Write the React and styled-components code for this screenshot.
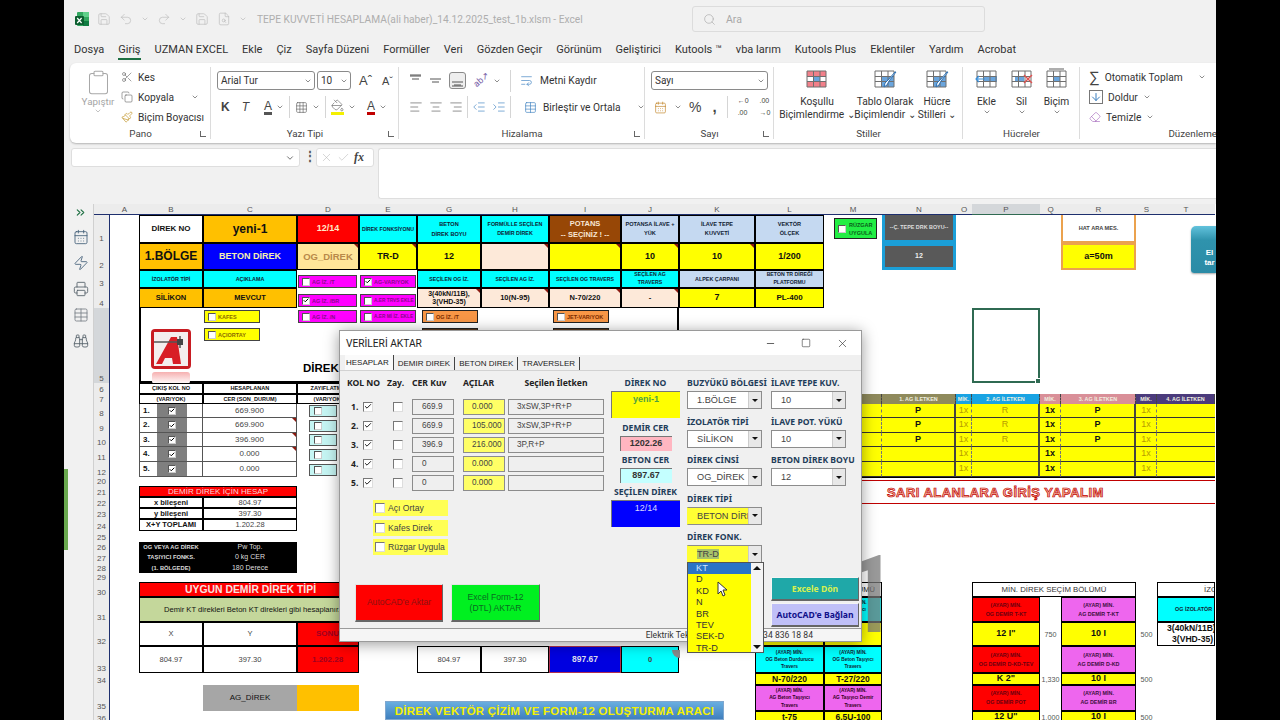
import { Fragment } from 'react';
import styled, { createGlobalStyle } from 'styled-components';
import {
  AlignCenter, AlignLeft, AlignRight, ArrowDown, ChevronDown, ChevronsRight, Clipboard, Copy, Eraser,
  Grid3x3, IndentDecrease, IndentIncrease, Paintbrush, PaintBucket, Redo2, Save, Scissors, Search,
  Undo2, WrapText, X, Check, Square, Minus, Binoculars, Printer, Zap, CalendarDays, Table, FileSearch,
} from 'lucide-react';

// Sheet grid
const COLS = 'ABCDEGHIJKLMNOPQRST';
const COL_W = [29, 64, 94, 62, 58, 64, 68, 72, 58, 76, 69, 58, 74, 16, 68, 21, 75, 21, 58];
const ROW_NO = [1, 2, 3, 4, 5, 6, 7, 8, 9, 10, 11, 12, 20, 21, 22, 23, 24, 25, 26, 27, 28, 29, 30, 31, 32, 33, 34, 35, 36];
const ROW_H = [28, 27, 18, 20, 75, 11, 10, 14, 15, 14, 15, 15, 9, 11, 11, 11, 12, 11, 10, 11, 10, 9, 15, 25, 24, 27, 12, 26, 12];
const col = (l) => COLS.indexOf(l) + 2;
const row = (n) => ROW_NO.indexOf(n) + 2;

const GlobalStyle = createGlobalStyle`
  html, body { margin: 0; padding: 0; background: #000; }
  body { font-family: Roboto, "Liberation Sans", sans-serif; }
`;

const Page = styled.div`
  width: 1280px;
  height: 720px;
  display: flex;
  justify-content: center;
  background: #000;
  overflow: hidden;
`;

const ExcelWindow = styled.div`
  position: relative;
  width: 1152px;
  height: 720px;
  display: flex;
  flex-direction: column;
  background: #f1f1f1;
  overflow: hidden;
`;

// Title bar
const TitleBar = styled.div`
  height: 38px;
  flex: none;
  display: flex;
  align-items: center;
  padding-left: 11px;
  gap: 8px;
  color: #b9b9b9;
`;

const TitleText = styled.span`
  margin-left: 2px;
  width: 427px;
  font-size: 10.2px;
  color: #aeaeae;
  white-space: nowrap;
`;

const SearchBox = styled.div`
  width: 293px;
  height: 26px;
  box-sizing: border-box;
  display: flex;
  align-items: center;
  gap: 10px;
  padding-left: 10px;
  border: 1px solid #dcdcdc;
  border-radius: 3px;
  font-size: 10.5px;
  color: #a8a8a8;
`;

const MenuBar = styled.div`
  height: 25px;
  flex: none;
  display: flex;
  align-items: center;
  padding-left: 10px;
  gap: 14px;
  font-size: 11px;
  color: #333;
`;

const MenuItem = styled.span`
  padding: 2px 0;
  white-space: nowrap;
  border-bottom: 2px solid ${(p) => (p.$active ? '#1d6f42' : 'transparent')};
`;

// Ribbon
const Ribbon = styled.div`
  height: 80px;
  flex: none;
  margin-left: 6px;
  display: flex;
  background: #fff;
  border-radius: 6px 0 0 6px;
  box-shadow: 0 1px 2px rgba(0, 0, 0, 0.25);
  font-size: 10.2px;
  color: #333;
`;

const Group = styled.div`
  position: relative;
  width: ${(p) => p.$w}px;
  flex: none;
  display: flex;
  flex-direction: column;
  padding: 3px 0 3px;
  box-sizing: border-box;
  overflow: hidden;
  &:not(:last-child)::after {
    content: '';
    position: absolute;
    right: 0;
    top: 4px;
    bottom: 4px;
    width: 1px;
    background: #dcdcdc;
  }
`;

const GroupBody = styled.div`
  flex: 1;
  display: flex;
  gap: ${(p) => p.$gap || 0}px;
  padding-left: ${(p) => p.$pl || 0}px;
  min-height: 0;
`;

const GroupLabel = styled.div`
  height: 13px;
  text-align: ${(p) => p.$align || 'center'};
  font-size: 9.8px;
  color: #444;
  line-height: 13px;
  white-space: nowrap;
`;

const Launcher = styled.span`
  position: absolute;
  right: 5px;
  bottom: 6px;
  width: 5px;
  height: 5px;
  border-left: 1px solid #666;
  border-bottom: 1px solid #666;
`;

const Stack = styled.div`
  display: flex;
  flex-direction: column;
  gap: ${(p) => p.$gap || 0}px;
  padding-top: ${(p) => p.$pt || 0}px;
`;

const Line = styled.div`
  display: flex;
  align-items: center;
  gap: ${(p) => p.$gap ?? 5}px;
  height: ${(p) => p.$h || 20}px;
  white-space: nowrap;
`;

const PasteButton = styled.div`
  width: 46px;
  display: flex;
  flex-direction: column;
  align-items: center;
  padding-top: 3px;
  color: #a5a5a5;
  font-size: 9.8px;
`;

const Combo = styled.div`
  width: ${(p) => p.$w}px;
  height: 19px;
  box-sizing: border-box;
  display: flex;
  align-items: center;
  justify-content: space-between;
  padding: 0 2px 0 3px;
  border: 1px solid #8a8a8a;
  border-radius: 3px;
  font-size: 10px;
`;

const Sep = styled.span`
  width: 1px;
  height: ${(p) => p.$h || 22}px;
  background: #d5d5d5;
  margin: 0 ${(p) => p.$m ?? 3}px;
`;

const FontLetter = styled.span`
  position: relative;
  font-family: "Liberation Sans", sans-serif;
  font-size: ${(p) => p.$size || 12}px;
  font-weight: ${(p) => (p.$bold ? 700 : 400)};
  font-style: ${(p) => (p.$italic ? 'italic' : 'normal')};
  border-bottom: ${(p) => (p.$bar ? `3px solid ${p.$bar}` : 'none')};
  line-height: 12px;
  color: #444;
  margin-left: ${(p) => p.$ml || 0}px;
`;

const BigTool = styled.div`
  width: ${(p) => p.$w}px;
  display: flex;
  flex-direction: column;
  align-items: center;
  text-align: center;
  font-size: 10.2px;
  line-height: 13px;
  flex: none;
  padding-top: 2px;
  white-space: nowrap;
  svg { margin-bottom: 5px; }
`;

const SelectedTool = styled.span`
  display: flex;
  padding: 1px;
  border: 1px solid #8a8a8a;
  border-radius: 3px;
  background: #eee;
`;

const RotatedAb = styled.span`
  display: inline-block;
  transform: rotate(-40deg);
  font-size: 9px;
  color: #7a5fa8;
  width: 13px;
`;

const ToolChevron = ({ ml }) => <ChevronDown size={8} color="#555" strokeWidth={2} style={ml ? { marginLeft: ml } : undefined} />;
const Ic = { strokeWidth: 1.1, color: '#555' };

// Formula bar
const FormulaBar = styled.div`
  height: 61px;
  flex: none;
  display: flex;
  gap: 4px;
  padding: 5px 0 0 7px;
  box-sizing: border-box;
`;

const NameBox = styled.div`
  width: 229px;
  height: 19px;
  box-sizing: border-box;
  display: flex;
  align-items: center;
  justify-content: flex-end;
  padding-right: 4px;
  background: #fff;
  border: 1px solid #dedede;
  border-radius: 3px;
`;

const FxDots = styled.span`
  width: 8px;
  height: 19px;
  text-align: center;
  font-size: 12px;
  font-weight: 700;
  line-height: 17px;
  color: #555;
`;

const FxBox = styled.div`
  width: 58px;
  height: 19px;
  box-sizing: border-box;
  display: flex;
  align-items: center;
  gap: 4px;
  padding-left: 3px;
  background: #fff;
  border: 1px solid #dedede;
  border-radius: 3px;
  font-family: "Liberation Serif", serif;
  font-style: italic;
  font-weight: 700;
  font-size: 12px;
  color: #444;
`;

const FormulaInput = styled.div`
  flex: 1;
  height: 49px;
  background: #fff;
  border: 1px solid #dedede;
  border-right: 0;
  border-radius: 3px 0 0 3px;
`;

// Sheet area
const SheetRow = styled.div`
  flex: 1;
  min-height: 0;
  display: flex;
`;

const SideRail = styled.div`
  width: 30px;
  flex: none;
  display: flex;
  flex-direction: column;
  align-items: center;
  gap: 10px;
  padding: 2px 0 0 4px;
  box-sizing: border-box;
  border-right: 1px solid #d0d0d0;
`;

const GreenHandle = styled.div`
  position: absolute;
  left: 0;
  top: 469px;
  width: 4px;
  height: 81px;
  background: #6aa84f;
`;

const SheetGrid = styled.div`
  flex: 1;
  display: grid;
  grid-template-columns: 16px ${COL_W.map((w) => `${w}px`).join(' ')};
  grid-template-rows: 11px ${ROW_H.map((h) => `${h}px`).join(' ')};
  background: #fff;
  font-family: "Liberation Sans", Arial, sans-serif;
  overflow: hidden;
`;

const ColHead = styled.div`
  grid-column: ${(p) => p.$c};
  grid-row: 1;
  display: flex;
  align-items: center;
  justify-content: center;
  font-size: 8px;
  color: #555;
  background: ${(p) => (p.$on ? '#d4d7da' : '#ececec')};
  border-bottom: 1px solid ${(p) => (p.$on ? '#2f6a52' : '#1e2f6e')};
`;

const RowHead = styled.div`
  grid-column: 1;
  grid-row: ${(p) => p.$r};
  display: flex;
  align-items: flex-end;
  justify-content: center;
  font-size: 8px;
  line-height: 9px;
  color: #555;
  background: ${(p) => (p.$on ? '#d4d7da' : '#ececec')};
  border-right: 1.5px solid #1e2f6e;
`;

const Cell = styled.div`
  position: relative;
  grid-column: ${(p) => p.$c} / span ${(p) => p.$cs || 1};
  grid-row: ${(p) => p.$r} / span ${(p) => p.$rs || 1};
  display: flex;
  align-items: center;
  justify-content: ${(p) => (p.$pl ? 'flex-start' : 'center')};
  padding-left: ${(p) => p.$pl || 0}px;
  text-align: center;
  white-space: ${(p) => (p.$pre ? 'pre' : 'pre-line')};
  box-sizing: border-box;
  overflow: hidden;
  background: ${(p) => p.$bg || 'transparent'};
  color: ${(p) => p.$fg || '#111'};
  font-size: ${(p) => p.$fs || 8}px;
  font-weight: ${(p) => (p.$bold === false ? 400 : 700)};
  line-height: ${(p) => p.$lh || 1.25};
  border: ${(p) => p.$border || '1px solid #000'};
  border-top-width: ${(p) => (p.$noTop ? 0 : '')};
  &::after {
    content: '';
    display: ${(p) => (p.$note ? 'block' : 'none')};
    position: absolute;
    top: 0;
    right: 0;
    border-top: 4px solid #8c1a10;
    border-left: 4px solid transparent;
  }
`;

const PlainCell = styled(Cell).attrs({ $bold: false, $border: 'none' })``;

const FrameBox = styled.div`
  grid-column: ${col('B')} / span 8;
  grid-row: ${row(5)};
  border: 2px solid #000;
  border-top: 0;
  background: #fff;
`;

const ChipColumn = styled.div`
  grid-column: ${(p) => p.$c};
  grid-row: ${(p) => p.$r};
  display: flex;
  flex-direction: column;
  gap: ${(p) => p.$gap || 5}px;
  padding: ${(p) => p.$pt || 2}px ${(p) => p.$pr ?? 2}px 0 ${(p) => p.$pl ?? 1}px;
  overflow: hidden;
`;

const Chip = styled.div`
  height: 13px;
  flex: none;
  box-sizing: border-box;
  display: flex;
  align-items: center;
  gap: 2px;
  padding-left: 3px;
  width: ${(p) => (p.$w ? `${p.$w}px` : 'auto')};
  background: ${(p) => p.$bg};
  border: 1px solid ${(p) => p.$line || '#444'};
  color: ${(p) => p.$fg || '#8a0a8a'};
  font-size: ${(p) => p.$fs || 5.5}px;
  font-weight: 700;
  white-space: nowrap;
  overflow: hidden;
`;

const WindChip = styled(Chip)`
  height: 21px;
  width: 43px;
  gap: 3px;
  white-space: pre-line;
  text-align: left;
  line-height: 8px;
`;

const ShapeCell = styled(Cell)`
  justify-content: flex-end;
  align-items: flex-start;
  padding: 3px 5px 0 0;
  overflow: visible;
  border: 0;
`;

const TinyBox = styled.span`
  width: 8px;
  height: 8px;
  flex: none;
  display: flex;
  align-items: center;
  justify-content: center;
  box-sizing: border-box;
  background: #fff;
  border: 1px solid #555;
  border-right-color: #ccc;
  border-bottom-color: #ccc;
  svg { display: block; }
`;

const TinyCheck = ({ on, size = 7 }) => (
  <TinyBox>{on && <Check size={size} color="#000" strokeWidth={4} />}</TinyBox>
);

const LogoWrap = styled.div`
  grid-column: ${col('B')};
  grid-row: ${row(5)};
  display: flex;
  justify-content: center;
  padding-top: 20px;
`;

const BigLabel = styled.div`
  grid-column: ${col('D')} / span 2;
  grid-row: ${row(5)};
  display: flex;
  align-items: flex-end;
  padding: 0 0 9px 6px;
  font-size: 11.5px;
  font-weight: 700;
`;

const KolCell = styled(Cell)`
  justify-content: flex-start;
  gap: 6px;
  padding-left: 3px;
  border-width: 0 1px 1px 1px;
  border-color: #555;
`;

const ValueCell = styled(Cell)`
  border-width: 0 1px 1px 0;
  border-color: #555;
`;

const ZayCell = styled(Cell)`
  justify-content: flex-start;
  padding-left: 12px;
  border: 0;
`;

const GrayPatch = styled.span`
  width: 30px;
  height: 100%;
  display: flex;
  align-items: center;
  justify-content: center;
  background: #7f7f7f;
  margin-left: 1px;
`;

const CyanPatch = styled.span`
  width: 28px;
  height: 12px;
  display: flex;
  align-items: center;
  padding-left: 4px;
  box-sizing: border-box;
  background: #c5f5f3;
  border: 1px solid #555;
`;

const ConductorHead = styled(Cell)`
  border: 0;
  border-right: 1px dashed #444;
`;

const YellowCell = styled(Cell)`
  background: #ffff00;
  border: 0;
  border-bottom: 1px solid ${(p) => p.$under || '#333'};
  border-right: ${(p) => p.$edge || '1px dashed #777'};
  color: ${(p) => p.$fg || '#111'};
  font-size: 9px;
`;

const SelectionBox = styled.div`
  grid-column: ${col('P')};
  grid-row: ${row(5)};
  position: relative;
  border: 2px solid #2f6a52;
  box-sizing: border-box;
  &::after {
    content: '';
    position: absolute;
    right: -3px;
    bottom: -3px;
    width: 4px;
    height: 4px;
    background: #2f6a52;
    border: 1px solid #fff;
  }
`;

const Banner = styled.div`
  grid-column: ${col('M')} / span 8;
  grid-row: ${row(20)} / span 5;
  align-self: start;
  height: 27px;
  margin-top: -1px;
  border-top: 2px solid #000;
  display: flex;
  flex-direction: column;
`;

const BannerInner = styled.div`
  height: 22px;
  margin-top: 2px;
  padding-left: 63px;
  display: flex;
  align-items: center;
  border-top: 1px solid #c00000;
  border-bottom: 1.5px solid #c00000;
  font-size: 13px;
  font-weight: 700;
  letter-spacing: 0.45px;
  color: #f6b9a0;
  -webkit-text-stroke: 0.7px #c00000;
  white-space: nowrap;
`;

// Floating shapes on the sheet
const FloatShape = styled.div`
  position: absolute;
  left: ${(p) => p.$x}px;
  top: ${(p) => p.$y}px;
  width: ${(p) => p.$w}px;
  height: ${(p) => p.$h}px;
`;

const SheetTitleShape = styled(FloatShape)`
  display: flex;
  align-items: center;
  justify-content: center;
  background: linear-gradient(#6aaee0, #3f7fbe);
  border: 1px solid #7fa7cf;
  box-sizing: border-box;
  font-family: "Liberation Sans", sans-serif;
  font-size: 11.4px;
  font-weight: 700;
  letter-spacing: 0.3px;
  color: #f4f000;
  white-space: nowrap;
`;

const TealShape = styled(FloatShape)`
  box-sizing: border-box;
  padding: 22px 0 0 12px;
  background: linear-gradient(#62c2dc, #2f93ad 30%, #2b8ba6);
  border-radius: 5px 0 0 3px;
  box-shadow: 0 1px 2px rgba(0, 0, 0, 0.35);
  font-family: "Liberation Sans", sans-serif;
  font-size: 8px;
  line-height: 10px;
  font-weight: 700;
  color: #fff;
  text-align: center;
`;

const GrayCurl = styled(FloatShape)`
  background: #8a8a8a;
  border-radius: 0 0 0 8px;
`;

const Watermark = styled.div`
  position: absolute;
  left: 776px;
  top: 541px;
  font-family: Roboto, sans-serif;
  font-size: 108px;
  line-height: 108px;
  font-weight: 500;
  color: rgba(120, 120, 120, 0.75);
`;

// Dialog
const Dialog = styled.div`
  position: absolute;
  left: 275px;
  top: 330px;
  width: 523px;
  height: 312px;
  box-sizing: border-box;
  display: flex;
  flex-direction: column;
  background: #f0f0f0;
  border: 1px solid #9a9a9a;
  box-shadow: 0 2px 14px rgba(0, 0, 0, 0.4);
  font-family: "Liberation Sans", sans-serif;
  color: #222;
`;

const DialogTitle = styled.div`
  height: 24px;
  flex: none;
  display: flex;
  align-items: center;
  padding: 0 12px 0 6px;
  background: #fff;
  font-family: Roboto, sans-serif;
  font-size: 10.2px;
  color: #222;
`;

const WindowButtons = styled.div`
  margin-left: auto;
  display: flex;
  align-items: center;
  gap: 25px;
`;

const TabStrip = styled.div`
  height: 15px;
  flex: none;
  display: flex;
  align-items: flex-end;
  padding-left: 5px;
  border-bottom: 1px solid #d2d2d2;
  font-size: 8px;
`;

const DialogTab = styled.div`
  height: ${(p) => (p.$active ? 15 : 13)}px;
  padding: 0 4px 0 1px;
  box-sizing: border-box;
  display: flex;
  align-items: center;
  white-space: nowrap;
  border-right: 1px solid #444;
  margin-right: 3px;
  background: ${(p) => (p.$active ? '#fafafa' : 'transparent')};
`;

const DialogBody = styled.div`
  flex: 1;
  display: flex;
  min-height: 0;
  padding: 6px 0 0 7px;
`;

const BoldFont = `"Noto Sans", "Liberation Sans", sans-serif`;

const LeftPane = styled.div`
  width: 264px;
  flex: none;
  display: flex;
  flex-direction: column;
`;

const KolGrid = styled.div`
  display: grid;
  grid-template-columns: 16px 30px 19px 42px 9px 42px 3px 96px;
  grid-template-rows: 20px repeat(5, 19px);
  align-items: center;
  font-size: 9px;
`;

const KolHeader = styled.span`
  font-family: ${BoldFont};
  font-size: 8.6px;
  font-weight: 700;
  white-space: nowrap;
  align-self: start;
  grid-row: 1;
  grid-column: ${(p) => p.$c} / span ${(p) => p.$cs || 1};
  text-align: ${(p) => p.$align || 'left'};
  padding-left: ${(p) => p.$pl || 0}px;
`;

const KolNo = styled.span`
  font-family: ${BoldFont};
  font-weight: 700;
  font-size: 8.6px;
  grid-column: 1;
  padding-left: 4px;
`;

const OptBox = styled.span`
  grid-column: ${(p) => p.$c || 'auto'};
  width: 10px;
  height: 10px;
  flex: none;
  display: flex;
  align-items: center;
  justify-content: center;
  box-sizing: border-box;
  background: #fff;
  border: 1px solid #777;
  border-right-color: #ddd;
  border-bottom-color: #ddd;
`;

const ValueBox = styled.span`
  grid-column: ${(p) => p.$c};
  height: 16px;
  box-sizing: border-box;
  display: flex;
  align-items: center;
  padding-left: ${(p) => p.$pl || 8}px;
  background: ${(p) => p.$bg || '#efefef'};
  border: 1px solid #8c8c8c;
  font-size: 8.2px;
  color: #444;
  white-space: nowrap;
`;

const OptionList = styled.div`
  display: flex;
  flex-direction: column;
  gap: 3.5px;
  margin: 8px 0 0 26px;
`;

const OptionChip = styled.div`
  width: 75px;
  height: 16px;
  display: flex;
  align-items: center;
  gap: 3px;
  padding-left: 2px;
  box-sizing: border-box;
  background: #ffff55;
  font-size: 8.6px;
  color: #444;
  white-space: nowrap;
`;

const ActionRow = styled.div`
  display: flex;
  gap: 8px;
  margin: 29px 0 0 8px;
`;

const ActionButton = styled.div`
  width: ${(p) => p.$w}px;
  height: 38px;
  display: flex;
  align-items: center;
  justify-content: center;
  text-align: center;
  box-sizing: border-box;
  white-space: pre-line;
  background: ${(p) => p.$bg};
  color: ${(p) => p.$fg};
  border: 1px solid #e4e4e4;
  border-right-color: #666;
  border-bottom: 2px solid #666;
  font-size: 8.6px;
  line-height: 11px;
`;

const InfoPane = styled.div`
  width: 69px;
  flex: none;
  display: flex;
  flex-direction: column;
  align-items: center;
`;

const InfoLabel = styled.div`
  height: 14px;
  display: flex;
  align-items: flex-start;
  margin-top: ${(p) => p.$mt || 0}px;
  font-family: ${BoldFont};
  font-size: 8.6px;
  font-weight: 700;
  color: #1f3d5a;
  white-space: nowrap;
`;

const InfoBox = styled.div`
  width: ${(p) => p.$w}px;
  height: ${(p) => p.$h}px;
  flex: none;
  box-sizing: border-box;
  padding-top: ${(p) => p.$pt || 0}px;
  text-align: center;
  background: ${(p) => p.$bg};
  border-top: 1px solid #777;
  border-left: 1px solid #777;
  color: ${(p) => p.$fg};
  font-size: 9px;
  font-weight: ${(p) => (p.$bold ? 700 : 400)};
  line-height: 13px;
`;

const FormPane = styled.div`
  flex: 1;
  display: grid;
  grid-template-columns: 84px 86px;
  grid-auto-rows: 38.5px;
  padding-left: 7px;
`;

const Field = styled.div`
  position: relative;
  display: flex;
  flex-direction: column;
  gap: 1px;
  grid-column: ${(p) => p.$c || 'auto'};
  grid-row: ${(p) => p.$r || 'auto'};
`;

const FieldLabel = styled.div`
  height: 13px;
  font-family: ${BoldFont};
  font-size: 8.6px;
  font-weight: 700;
  color: #1f3d5a;
  white-space: nowrap;
`;

const SelectBox = styled.div`
  width: 75px;
  height: 18px;
  box-sizing: border-box;
  position: relative;
  display: flex;
  align-items: center;
  padding-left: 9px;
  background: ${(p) => (p.$yellow ? 'linear-gradient(90deg, #ffff33 84%, #fff 84%)' : '#fff')};
  border: 1px solid #8c8c8c;
  border-left-color: ${(p) => (p.$yellow ? '#ffff33' : '#8c8c8c')};
  font-size: 9.2px;
  color: #444;
  white-space: nowrap;
  overflow: hidden;
`;

const SelectArrow = styled.span`
  position: absolute;
  right: 0;
  top: 0;
  bottom: 0;
  width: 12px;
  display: flex;
  align-items: center;
  justify-content: center;
  background: #e8e8e8;
  border-left: 1px solid #ccc;
  &::after {
    content: '';
    border-top: 3px solid #111;
    border-left: 3.5px solid transparent;
    border-right: 3.5px solid transparent;
  }
`;

const SelectedText = styled.span`
  background: ${(p) => (p.$on ? '#a9c26a' : 'transparent')};
`;

const SideButtons = styled.div`
  grid-column: 2;
  grid-row: 5;
  display: flex;
  flex-direction: column;
  gap: 2px;
  padding-top: 46px;
`;

const SideButton = styled.div`
  width: 88px;
  height: ${(p) => p.$h}px;
  flex: none;
  display: flex;
  align-items: center;
  justify-content: center;
  box-sizing: border-box;
  background: ${(p) => p.$bg};
  color: ${(p) => p.$fg};
  border: 1px solid #f5f5f5;
  border-right-color: #666;
  border-bottom: 2px solid #666;
  font-family: ${BoldFont};
  font-size: 8.6px;
  font-weight: 700;
`;

const DropList = styled.div`
  position: absolute;
  left: 0;
  top: 31px;
  width: 77px;
  height: 91px;
  display: flex;
  box-sizing: border-box;
  background: #fff;
  border: 1px solid #555;
  z-index: 3;
`;

const DropItems = styled.div`
  width: 63px;
  flex: none;
  background: #ffff00;
  font-size: 9.2px;
  line-height: 11.4px;
  color: #333;
`;

const DropItem = styled.div`
  padding-left: 8px;
  background: ${(p) => (p.$on ? '#2a74c6' : 'transparent')};
  color: ${(p) => (p.$on ? '#cfe6ff' : '#333')};
`;

const ScrollTrack = styled.div`
  flex: 1;
  position: relative;
  background: #f4f4f4;
`;

const ScrollCap = styled.span`
  position: absolute;
  left: 2px;
  ${(p) => (p.$down ? 'bottom: 3px;' : 'top: 3px;')}
  border-left: 4px solid transparent;
  border-right: 4px solid transparent;
  ${(p) => (p.$down ? 'border-top: 4px solid #111;' : 'border-bottom: 4px solid #111;')}
`;

const Pointer = styled.svg`
  position: absolute;
  left: 29px;
  top: 18px;
`;

const StatusLine = styled.div`
  height: 12px;
  flex: none;
  display: flex;
  justify-content: flex-end;
  align-items: center;
  padding-right: 48px;
  border-top: 1px solid #9a9a9a;
  background: #f5f5f5;
  font-family: Roboto, sans-serif;
  font-size: 8.6px;
  color: #333;
  white-space: nowrap;
`;

// Data
const topCells = [
  ['B', 1, 'DİREK NO', { bg: '#fff', fs: 8 }],
  ['C', 1, 'yeni-1', { bg: '#ffc000', fs: 12 }],
  ['D', 1, '12/14', { bg: '#ff0000', fg: '#ffe9c8', fs: 9 }],
  ['E', 1, 'DİREK FONKSİYONU', { bg: '#00ffff', fg: '#123', fs: 5.2 }],
  ['G', 1, 'BETON\nDİREK BOYU', { bg: '#00ffff', fg: '#123', fs: 5.6, lh: 1.8 }],
  ['H', 1, 'FORMÜLLE SEÇİLEN\nDEMİR DİREK', { bg: '#00ffff', fg: '#123', fs: 5.4, lh: 1.7 }],
  ['I', 1, 'POTANS\n--    SEÇİNİZ !   --', { bg: '#974706', fg: '#f7e6d4', fs: 7.5, lh: 1.5 }],
  ['J', 1, 'POTANSA İLAVE +\nYÜK', { bg: '#c5d9f1', fg: '#123', fs: 5.6, lh: 1.7 }],
  ['K', 1, 'İLAVE TEPE\nKUVVETİ', { bg: '#c5d9f1', fg: '#123', fs: 5.6, lh: 1.7 }],
  ['L', 1, 'VEKTÖR\nÖLÇEK', { bg: '#c5d9f1', fg: '#123', fs: 5.6, lh: 1.7 }],
  ['B', 2, '1.BÖLGE', { bg: '#ffc000', fs: 12 }],
  ['C', 2, 'BETON DİREK', { bg: '#0000ff', fg: '#f5f0b0', fs: 9 }],
  ['D', 2, 'OG_DİREK', { bg: '#ffe699', fg: '#b8894a', fs: 9.5, note: 1 }],
  ['E', 2, 'TR-D', { bg: '#ffff00', fs: 9, note: 1 }],
  ['G', 2, '12', { bg: '#ffff00', fs: 9 }],
  ['H', 2, '', { bg: '#fde9d9', note: 1 }],
  ['I', 2, '', { bg: '#ffff00', note: 1 }],
  ['J', 2, '10', { bg: '#ffff00', fs: 9, note: 1 }],
  ['K', 2, '10', { bg: '#ffff00', fs: 9, note: 1 }],
  ['L', 2, '1/200', { bg: '#ffff00', fs: 9 }],
  ['B', 3, 'İZOLATÖR TİPİ', { bg: '#00ffff', fg: '#123', fs: 5.4 }],
  ['C', 3, 'AÇIKLAMA', { bg: '#00ffff', fg: '#123', fs: 5.4 }],
  ['G', 3, 'SEÇİLEN OG İZ.', { bg: '#00ffff', fg: '#123', fs: 5.2 }],
  ['H', 3, 'SEÇİLEN AG İZ.', { bg: '#00ffff', fg: '#123', fs: 5.2 }],
  ['I', 3, 'SEÇİLEN OG TRAVERS', { bg: '#00ffff', fg: '#123', fs: 5.2 }],
  ['J', 3, 'SEÇİLEN AG\nTRAVERS', { bg: '#00ffff', fg: '#123', fs: 5.2, lh: 1.5 }],
  ['K', 3, 'ALPEK ÇARPANI', { bg: '#c5d9f1', fg: '#123', fs: 5.4 }],
  ['L', 3, 'BETON TR DİREĞİ\nPLATFORMU', { bg: '#c5d9f1', fg: '#123', fs: 5.2, lh: 1.5 }],
  ['B', 4, 'SİLİKON', { bg: '#ffc000', fs: 7.5 }],
  ['C', 4, 'MEVCUT', { bg: '#ffc000', fs: 7.5 }],
  ['G', 4, '3(40kN/11B),\n3(VHD-35)', { bg: '#fde9d9', fs: 7, lh: 1.15, note: 1 }],
  ['H', 4, '10(N-95)', { bg: '#fde9d9', fs: 7.5, note: 1 }],
  ['I', 4, 'N-70/220', { bg: '#fde9d9', fs: 7.5, note: 1 }],
  ['J', 4, '-', { bg: '#fde9d9', fs: 7.5, note: 1 }],
  ['K', 4, '7', { bg: '#ffff00', fs: 9 }],
  ['L', 4, 'PL-400', { bg: '#ffff00', fs: 8 }],
];

const kolRows = [
  ['1.', '669.900'],
  ['2.', '669.900'],
  ['3.', '396.900'],
  ['4.', '0.000'],
  ['5.', '0.000'],
];

const dialogRows = [
  ['1.', '669.9', '0.000', '3xSW,3P+R+P'],
  ['2.', '669.9', '105.000', '3xSW,3P+R+P'],
  ['3.', '396.9', '216.000', '3P,R+P'],
  ['4.', '0', '0.000', ''],
  ['5.', '0', '0.000', ''],
];

const conductorHeads = [
  ['M', 'MİK.', '#8f8a5c'],
  ['N', '1. AG İLETKEN', '#8f8a5c'],
  ['O', 'MİK.', '#19a3e3'],
  ['P', '2. AG İLETKEN', '#19a3e3'],
  ['Q', 'MİK.', '#d98f98'],
  ['R', '3. AG İLETKEN', '#d98f98'],
  ['S', 'MİK.', '#4b3b7c'],
  ['T', '4. AG İLETKEN', '#4b3b7c'],
];

const conductorRows = [
  ['P', 'R', 'P'],
  ['P', 'R', 'P'],
  ['P', 'R', 'P'],
  ['', '', ''],
  ['', '', ''],
];

const minRows = [
  [31, 32, 'OG DEMİR T-KT', 'AG DEMİR T-KT', '12 I"', '750', '10 I', '500'],
  [33, 34, 'OG DEMİR D-KD-TEV', 'AG DEMİR D-KD', 'K 2"', '1,330', '10 I', '500'],
  [35, 36, 'OG DEMİR POT', 'AG DEMİR BR', '12 U"', '1,000', '10 I', '500'],
];

const DROP_ITEMS = ['KT', 'D', 'KD', 'N', 'BR', 'TEV', 'SEK-D', 'TR-D'];

// Small drawings
const ExcelLogo = () => (
  <svg width="14" height="14" viewBox="0 0 14 14">
    <rect x="2" y="0" width="12" height="14" rx="1" fill="#33a860" />
    <rect x="8" y="0" width="6" height="5" fill="#5fd08a" />
    <rect x="8" y="9" width="6" height="5" fill="#107c41" />
    <rect x="0" y="4" width="9" height="9" rx="1" fill="#0c5f30" />
    <path d="M2.2 6l4.4 5M6.6 6l-4.4 5" stroke="#fff" strokeWidth="1.2" />
  </svg>
);

const VAlignIcon = ({ y }) => (
  <svg width="13" height="13" viewBox="0 0 13 13">
    <path d={`M1 ${y}h11M3 ${y + 3}h7`} stroke="#555" strokeWidth="1" fill="none" />
    {y > 6 && <path d="M1 12h11" stroke="#555" strokeWidth="1" />}
    {y < 4 && <path d="M1 1h11" stroke="#555" strokeWidth="1" />}
  </svg>
);

const CellsIcon = ({ children, w = 24, h = 22 }) => (
  <svg width={w} height={h} viewBox="0 0 24 22">
    {children}
  </svg>
);

const grid = (
  <path d="M2 3h19v16H2zM2 8.5h19M2 13.5h19M8.5 3v16M15 3v16" fill="none" stroke="#6f6f6f" strokeWidth="1" />
);

const brush = (
  <path d="M23 4l-7 9-2 4-3 2 1-4 3-3 7-8z" fill="#fff" stroke="#2d6fb0" strokeWidth="1" />
);

const CondIcon = () => (
  <CellsIcon>
    <rect x="2" y="3" width="19" height="5" fill="#f2808a" />
    <rect x="2" y="13" width="19" height="6" fill="#f2808a" />
    <rect x="8" y="8" width="7" height="5" fill="#6aa5dd" />
    {grid}
  </CellsIcon>
);

const TableStyleIcon = () => (
  <CellsIcon>
    <rect x="8" y="8" width="13" height="11" fill="#6aa5dd" />
    {grid}
    {brush}
  </CellsIcon>
);

const InsertIcon = () => (
  <CellsIcon>
    <rect x="8" y="8" width="14" height="6" fill="#6aa5dd" />
    {grid}
    <path d="M10 11H1m3-3l-3 3 3 3" fill="#cfe6ff" stroke="#3a8fd8" strokeWidth="1.2" />
  </CellsIcon>
);

const DeleteIcon = () => (
  <CellsIcon>
    <rect x="5" y="8" width="9" height="6" fill="#6aa5dd" />
    {grid}
    <path d="M14 7l8 8m0-8l-8 8" stroke="#e05050" strokeWidth="1.4" />
  </CellsIcon>
);

const FormatIcon = () => (
  <CellsIcon>
    <path d="M4 1h15" stroke="#777" strokeWidth="1.2" />
    <rect x="8" y="8" width="7" height="5" fill="#6aa5dd" />
    {grid}
  </CellsIcon>
);

const CadLogo = () => (
  <svg width="42" height="56" viewBox="0 0 42 56">
    <defs>
      <linearGradient id="cadFade" x1="0" y1="0" x2="0" y2="1">
        <stop offset="0" stopColor="#f6b0b0" />
        <stop offset="1" stopColor="#fff" />
      </linearGradient>
    </defs>
    <rect x="1" y="1" width="40" height="40" rx="4" fill="#c81c22" />
    <rect x="4" y="4" width="34" height="34" fill="#f4eeee" />
    <path d="M6 36L21 9h6l4 27h-8l-1-6h-7l-3 6z" fill="#d81e26" />
    <path d="M4 14h28M30 8v12" stroke="#555" strokeWidth="1.5" />
    <rect x="27" y="11" width="6" height="6" fill="#444" />
    <rect x="2" y="44" width="38" height="12" rx="3" fill="url(#cadFade)" />
  </svg>
);

const App = () => {
  const rowHeads = ROW_NO.map((n) => (
    <RowHead key={n} $r={row(n)} $on={n === 5}>
      {n}
    </RowHead>
  ));

  return (
    <Page>
      <GlobalStyle />
      <ExcelWindow>
        <TitleBar>
          <ExcelLogo />
          <Save size={14} strokeWidth={1.1} />
          <Undo2 size={14} strokeWidth={1.1} />
          <ChevronDown size={8} />
          <Redo2 size={14} strokeWidth={1.1} />
          <ChevronDown size={8} />
          <Save size={14} strokeWidth={1.1} />
          <FileSearch size={14} strokeWidth={1.1} />
          <ChevronDown size={8} />
          <TitleText>TEPE KUVVETİ HESAPLAMA(ali haber)_14.12.2025_test_1b.xlsm  -  Excel</TitleText>
          <SearchBox>
            <Search size={13} strokeWidth={1.2} />
            Ara
          </SearchBox>
        </TitleBar>

        <MenuBar>
          {['Dosya', 'Giriş', 'UZMAN EXCEL', 'Ekle', 'Çiz', 'Sayfa Düzeni', 'Formüller', 'Veri', 'Gözden Geçir', 'Görünüm', 'Geliştirici', 'Kutools ™', 'vba larım', 'Kutools Plus', 'Eklentiler', 'Yardım', 'Acrobat'].map((t) => (
            <MenuItem key={t} $active={t === 'Giriş'}>
              {t}
            </MenuItem>
          ))}
        </MenuBar>

        <Ribbon>
          <Group $w={141}>
            <GroupBody $pl={5}>
              <PasteButton>
                <Clipboard size={27} strokeWidth={0.9} color="#a8a8a8" />
                Yapıştır
                <ChevronDown size={8} />
              </PasteButton>
              <Stack $pt={1}>
                <Line $h={21}><Scissors size={12} {...Ic} /> Kes</Line>
                <Line $h={21}><Copy size={12} {...Ic} /> Kopyala <ToolChevron ml={12} /></Line>
                <Line $h={21}><Paintbrush size={12} strokeWidth={1.2} color="#b8860b" /> Biçim Boyacısı</Line>
              </Stack>
            </GroupBody>
            <GroupLabel>Pano</GroupLabel>
            <Launcher />
          </Group>

          <Group $w={188}>
            <GroupBody $pl={6}>
              <Stack $pt={5} $gap={6}>
                <Line $gap={2} $h={19}>
                  <Combo $w={98}>Arial Tur <ToolChevron /></Combo>
                  <Combo $w={34}>10 <ToolChevron /></Combo>
                  <FontLetter $size={13} $ml={6}>Aˆ</FontLetter>
                  <FontLetter $size={11} $ml={8}>Aˇ</FontLetter>
                </Line>
                <Line $gap={4} $h={22}>
                  <FontLetter $bold $ml={4}>K</FontLetter>
                  <FontLetter $italic $ml={8}>T</FontLetter>
                  <FontLetter $bar="#555" $ml={11}>A</FontLetter>
                  <ToolChevron />
                  <Sep $m={1} />
                  <Grid3x3 size={13} {...Ic} />
                  <ToolChevron />
                  <Sep $m={1} />
                  <PaintBucket size={13} strokeWidth={1.2} color="#666" style={{ borderBottom: '3px solid #f4f000' }} />
                  <ToolChevron />
                  <FontLetter $bar="#c00000" $ml={7}>A</FontLetter>
                  <ToolChevron />
                </Line>
              </Stack>
            </GroupBody>
            <GroupLabel>Yazı Tipi</GroupLabel>
            <Launcher />
          </Group>

          <Group $w={246}>
            <GroupBody $pl={10}>
              <Stack $pt={5} $gap={6}>
                <Line $gap={7} $h={19}>
                  <VAlignIcon y={2} />
                  <VAlignIcon y={5} />
                  <SelectedTool><VAlignIcon y={8} /></SelectedTool>
                  <RotatedAb>ab↗</RotatedAb>
                  <ToolChevron />
                  <Sep $m={2} />
                  <WrapText size={13} color="#3a7fbf" strokeWidth={1.2} />
                  <span>Metni Kaydır</span>
                </Line>
                <Line $gap={6} $h={22}>
                  <AlignLeft size={14} {...Ic} />
                  <AlignCenter size={14} {...Ic} />
                  <AlignRight size={14} {...Ic} />
                  <Sep $m={-2} />
                  <IndentDecrease size={14} color="#3a7fbf" strokeWidth={1.1} />
                  <IndentIncrease size={14} color="#3a7fbf" strokeWidth={1.1} />
                  <Sep $m={-2} />
                  <Table size={13} color="#3a7fbf" strokeWidth={1.2} style={{ marginLeft: 9 }} />
                  <span>Birleştir ve Ortala</span>
                  <ToolChevron ml={10} />
                </Line>
              </Stack>
            </GroupBody>
            <GroupLabel>Hizalama</GroupLabel>
            <Launcher />
          </Group>

          <Group $w={129}>
            <GroupBody $pl={6}>
              <Stack $pt={5} $gap={6}>
                <Line $h={19}><Combo $w={117}>Sayı <ToolChevron /></Combo></Line>
                <Line $gap={7} $h={22}>
                  <CalendarDays size={13} color="#c08020" strokeWidth={1.2} style={{ marginLeft: 3 }} />
                  <ToolChevron />
                  <FontLetter $size={14}>%</FontLetter>
                  <FontLetter $size={15} $bold $ml={4}>,</FontLetter>
                  <Sep />
                  <FontLetter $size={7}>←0<br />.00</FontLetter>
                  <FontLetter $size={7} $ml={4}>.00<br />→0</FontLetter>
                </Line>
              </Stack>
            </GroupBody>
            <GroupLabel>Sayı</GroupLabel>
            <Launcher />
          </Group>

          <Group $w={189}>
            <GroupBody $pl={1}>
              <BigTool $w={84}>
                <CondIcon />
                Koşullu
                <span>Biçimlendirme ⌄</span>
              </BigTool>
              <BigTool $w={52}>
                <TableStyleIcon />
                Tablo Olarak
                <span>Biçimlendir ⌄</span>
              </BigTool>
              <BigTool $w={52}>
                <TableStyleIcon />
                Hücre
                <span>Stilleri ⌄</span>
              </BigTool>
            </GroupBody>
            <GroupLabel>Stiller</GroupLabel>
          </Group>

          <Group $w={117}>
            <GroupBody $pl={6}>
              <BigTool $w={35}><InsertIcon />Ekle<ToolChevron /></BigTool>
              <BigTool $w={35}><DeleteIcon />Sil<ToolChevron /></BigTool>
              <BigTool $w={35}><FormatIcon />Biçim<ToolChevron /></BigTool>
            </GroupBody>
            <GroupLabel>Hücreler</GroupLabel>
          </Group>

          <Group $w={137}>
            <GroupBody $pl={9}>
              <Stack $pt={1}>
                <Line $h={21}>
                  <FontLetter $size={15}>∑</FontLetter>
                  Otomatik Toplam
                  <ToolChevron ml={10} />
                </Line>
                <Line $h={21}><ArrowDown size={12} color="#3a7fbf" style={{ border: '1px solid #777' }} /> Doldur <ToolChevron /></Line>
                <Line $h={21}><Eraser size={12} color="#a060b8" strokeWidth={1.2} /> Temizle <ToolChevron /></Line>
              </Stack>
            </GroupBody>
            <GroupLabel $align="right">Düzenleme</GroupLabel>
          </Group>
        </Ribbon>

        <FormulaBar>
          <NameBox><ChevronDown size={10} color="#555" /></NameBox>
          <FxDots>⋮</FxDots>
          <FxBox>
            <X size={13} color="#b5b5b5" strokeWidth={1} />
            <Check size={13} color="#b5b5b5" strokeWidth={1} />
            fx
          </FxBox>
          <FormulaInput />
        </FormulaBar>

        <SheetRow>
          <SideRail>
            <ChevronsRight size={13} color="#1d6f42" strokeWidth={2} />
            <CalendarDays size={16} color="#44607a" strokeWidth={1.3} />
            <Zap size={16} color="#44607a" strokeWidth={1.3} />
            <Printer size={16} color="#55606a" strokeWidth={1.3} />
            <Table size={16} color="#7a8088" strokeWidth={1.3} />
            <Binoculars size={16} color="#55606a" strokeWidth={1.3} />
          </SideRail>

          <SheetGrid>
            <ColHead $c={1} />
            {COLS.split('').map((l) => (
              <ColHead key={l} $c={col(l)} $on={l === 'P'}>{l}</ColHead>
            ))}
            {rowHeads}

            {/* top table */}
            {topCells.map(([c, r, text, o]) => (
              <Cell key={c + r} $c={col(c)} $r={row(r)} $bg={o.bg} $fg={o.fg} $fs={o.fs} $lh={o.lh} $note={o.note}>
                {text}
              </Cell>
            ))}
            <ChipColumn $c={col('D')} $r={`${row(3)} / span 2`} $pt={5} $gap={6}>
              <Chip $bg="#ff00ff"><TinyCheck /> AG İZ. /T</Chip>
              <Chip $bg="#ff00ff"><TinyCheck on /> AG İZ. /BR</Chip>
            </ChipColumn>
            <ChipColumn $c={col('E')} $r={`${row(3)} / span 2`} $pt={5} $gap={6} $pr={1}>
              <Chip $bg="#ff00ff"><TinyCheck on /> AG-VAR/YOK</Chip>
              <Chip $bg="#ff00ff" $fs={4.8}><TinyCheck /> A.ER TRVS EKLE</Chip>
            </ChipColumn>

            <ShapeCell $c={col('M')} $r={row(1)}>
              <WindChip $bg="#22ee44" $line="#222" $fg="#0a5a1a">
                <TinyCheck />
                {'RÜZGAR\nUYGULA'}
              </WindChip>
            </ShapeCell>
            <Cell $c={col('N')} $r={row(1)} $bg="#595959" $fg="#ddd" $fs={5.4} $border="3px solid #1b9fd8" $noTop>--Ç. TEPE DRK BOYU--</Cell>
            <Cell $c={col('N')} $r={row(2)} $bg="#595959" $fg="#eee" $fs={7} $border="3px solid #1b9fd8">12</Cell>
            <Cell $c={col('R')} $r={row(1)} $bg="#fff" $fg="#444" $fs={5.6} $border="2px solid #eba24e" $noTop>HAT ARA MES.</Cell>
            <Cell $c={col('R')} $r={row(2)} $bg="#ffff00" $fs={9} $border="2px solid #eba24e">a=50m</Cell>

            {/* row 5 */}
            <FrameBox />
            <LogoWrap><CadLogo /></LogoWrap>
            <ChipColumn $c={col('C')} $r={row(5)}>
              <Chip $bg="#ffff00" $fg="#8a6a00" $w={56}><TinyCheck /> KAFES</Chip>
              <Chip $bg="#ffff00" $fg="#8a6a00" $w={56}><TinyCheck /> AÇIORTAY</Chip>
            </ChipColumn>
            <ChipColumn $c={col('D')} $r={row(5)}>
              <Chip $bg="#ff00ff"><TinyCheck /> AG İZ. /N</Chip>
            </ChipColumn>
            <ChipColumn $c={col('E')} $r={row(5)} $pr={1}>
              <Chip $bg="#ff00ff" $fs={4.8}><TinyCheck /> A.ER Mİ İZ. EKLE</Chip>
            </ChipColumn>
            <ChipColumn $c={col('G')} $r={row(5)} $pl={5} $pr={3}>
              <Chip $bg="#f79646" $fg="#7a2a00" $line="#222"><TinyCheck /> OG İZ. /T</Chip>
              <Chip $bg="#5a3a20" $fg="#fff" $line="#222" />
            </ChipColumn>
            <ChipColumn $c={col('I')} $r={row(5)} $pl={4} $pr={12}>
              <Chip $bg="#f79646" $fg="#7a2a00" $line="#222"><TinyCheck /> JET-VAR/YOK</Chip>
              <Chip $bg="#5a3a20" $fg="#fff" $line="#222" />
            </ChipColumn>
            <BigLabel>DİREK</BigLabel>
            <SelectionBox />

            {/* column table */}
            <Cell $c={col('B')} $r={row(6)} $fs={5.6} $bg="#fff">ÇIKIŞ KOL NO</Cell>
            <Cell $c={col('C')} $r={row(6)} $fs={5.6} $bg="#fff">HESAPLANAN</Cell>
            <Cell $c={col('D')} $r={row(6)} $fs={5.6} $bg="#fff">ZAYIFLATMA</Cell>
            <Cell $c={col('B')} $r={row(7)} $fs={5.6} $bg="#fff">(VAR/YOK)</Cell>
            <Cell $c={col('C')} $r={row(7)} $fs={5.6} $bg="#fff">CER (SON_DURUM)</Cell>
            <Cell $c={col('D')} $r={row(7)} $fs={5.6} $bg="#fff">(VAR/YOK)</Cell>
            {kolRows.map(([no, cer], i) => (
              <Fragment key={no}>
                <KolCell $c={col('B')} $r={row(8 + i)} $fs={8}>
                  {no}
                  <GrayPatch><TinyCheck on /></GrayPatch>
                </KolCell>
                <ValueCell $c={col('C')} $r={row(8 + i)} $fs={8} $bold={false} $fg="#444" $note={i > 0 && i < 4}>
                  {cer}
                </ValueCell>
                <ZayCell $c={col('D')} $r={row(8 + i)}>
                  <CyanPatch><TinyCheck /></CyanPatch>
                </ZayCell>
              </Fragment>
            ))}

            {/* conductors */}
            {conductorHeads.map(([c, text, bg]) => (
              <ConductorHead key={c} $c={col(c)} $r={row(7)} $bg={bg} $fg="#f0f0e0" $fs={5.4}>
                {text}
              </ConductorHead>
            ))}
            {conductorRows.map(([n, r, p], i) => (
              <Fragment key={i}>
                <YellowCell $c={col('M')} $r={row(8 + i)}>1x</YellowCell>
                <YellowCell $c={col('N')} $r={row(8 + i)} $edge="2px solid #444">{n}</YellowCell>
                <YellowCell $c={col('O')} $r={row(8 + i)} $fg="#b59b00" $bold={false}>1x</YellowCell>
                <YellowCell $c={col('P')} $r={row(8 + i)} $edge="2px solid #444" $fg="#b59b00" $bold={false}>{r}</YellowCell>
                <YellowCell $c={col('Q')} $r={row(8 + i)}>1x</YellowCell>
                <YellowCell $c={col('R')} $r={row(8 + i)} $edge="2px solid #444">{p}</YellowCell>
                <YellowCell $c={col('S')} $r={row(8 + i)} $fg="#b59b00" $bold={false}>1x</YellowCell>
                <YellowCell $c={col('T')} $r={row(8 + i)} $edge="none" />
              </Fragment>
            ))}
            <Banner>
              <BannerInner>SARI ALANLARA GİRİŞ YAPALIM</BannerInner>
            </Banner>

            {/* demir table */}
            <Cell $c={col('B')} $cs={2} $r={row(21)} $bg="#ff0000" $fg="#f8d8d8" $fs={8} $bold={false}>DEMİR DİREK İÇİN HESAP</Cell>
            <Cell $c={col('B')} $r={row(22)} $fs={7.5}>x bileşeni</Cell>
            <Cell $c={col('C')} $r={row(22)} $fs={7.5} $bold={false} $fg="#444">804.97</Cell>
            <Cell $c={col('B')} $r={row(23)} $fs={7.5}>y  bileşeni</Cell>
            <Cell $c={col('C')} $r={row(23)} $fs={7.5} $bold={false} $fg="#444">397.30</Cell>
            <Cell $c={col('B')} $r={row(24)} $fs={7.5}>X+Y TOPLAMI</Cell>
            <Cell $c={col('C')} $r={row(24)} $fs={7.5} $bold={false} $fg="#444">1.202.28</Cell>

            <Cell $c={col('B')} $r={row(26)} $rs={3} $bg="#000" $fg="#ddd" $fs={5.8} $lh={1.75}>{'OG VEYA AG DİREK\nTAŞIYICI FONKS.\n(1. BÖLGEDE)'}</Cell>
            <Cell $c={col('C')} $r={row(26)} $rs={3} $bg="#000" $fg="#ddd" $fs={7} $bold={false} $lh={1.45}>{'Pw Top.\n0 kg CER\n180 Derece'}</Cell>

            {/* uygun direk */}
            <Cell $c={col('B')} $cs={3} $r={row(30)} $bg="#ff0000" $fg="#f8e0e0" $fs={10.4} $pl={45}>UYGUN DEMİR DİREK TİPİ</Cell>
            <Cell $c={col('B')} $cs={3} $r={row(31)} $bg="#c4d79b" $fs={7.6} $bold={false} $pl={24}>Demir KT direkleri Beton KT direkleri gibi hesaplanır.</Cell>
            <Cell $c={col('B')} $r={row(32)} $fs={7.5} $bold={false} $fg="#444">X</Cell>
            <Cell $c={col('C')} $r={row(32)} $fs={7.5} $bold={false} $fg="#444">Y</Cell>
            <Cell $c={col('D')} $r={row(32)} $bg="#ff0000" $fg="#a00020" $fs={8} $pl={18}>SONUÇ</Cell>
            <Cell $c={col('B')} $r={row(33)} $fs={7.5} $bold={false} $fg="#444">804.97</Cell>
            <Cell $c={col('C')} $r={row(33)} $fs={7.5} $bold={false} $fg="#444">397.30</Cell>
            <Cell $c={col('D')} $r={row(33)} $bg="#ff0000" $fg="#a00020" $fs={8} $pl={14}>1.202.28</Cell>
            <Cell $c={col('G')} $r={row(33)} $fs={7.5} $bold={false} $fg="#444">804.97</Cell>
            <Cell $c={col('H')} $r={row(33)} $fs={7.5} $bold={false} $fg="#444">397.30</Cell>
            <Cell $c={col('I')} $r={row(33)} $bg="#0000e0" $fg="#dde" $fs={8.5} $border="1px solid #b03050">897.67</Cell>
            <Cell $c={col('J')} $r={row(33)} $bg="#00ffff" $fg="#444" $fs={7.5}>0</Cell>
            <PlainCell $c={col('C')} $r={row(35)} $bg="#a6a6a6" $fs={8}>AG_DİREK</PlainCell>
            <PlainCell $c={col('D')} $r={row(35)} $bg="#ffc000" />

            {/* travers selection */}
            <Cell $c={col('L')} $cs={2} $r={row(30)} $bg="#fff" $fs={7.5} $bold={false}>MİN. TRAVERS SEÇİM BÖLÜMÜ</Cell>
            <Cell $c={col('L')} $r={row(31)} $bg="#00ffff" $fs={5} />
            <Cell $c={col('M')} $r={row(31)} $bg="#00ffff" $fg="#123" $fs={4.8} $lh={1.5}>{'(AYAR) MİN.\nAG Taşıyıcı\nTravers'}</Cell>
            <Cell $c={col('L')} $r={row(32)} $bg="#ffff00" $fs={9} />
            <Cell $c={col('M')} $r={row(32)} $bg="#ffff00" $fs={9}>10</Cell>
            <Cell $c={col('L')} $r={row(33)} $bg="#00ffff" $fg="#123" $fs={4.8} $lh={1.5}>{'(AYAR) MİN.\nOG Beton Durdurucu\nTravers'}</Cell>
            <Cell $c={col('M')} $r={row(33)} $bg="#00ffff" $fg="#123" $fs={4.8} $lh={1.5}>{'(AYAR) MİN.\nOG Beton Taşıyıcı\nTravers'}</Cell>
            <Cell $c={col('L')} $r={row(34)} $bg="#ffff00" $fs={8.5}>N-70/220</Cell>
            <Cell $c={col('M')} $r={row(34)} $bg="#ffff00" $fs={8.5}>T-27/220</Cell>
            <Cell $c={col('L')} $r={row(35)} $bg="#ee66ee" $fg="#302" $fs={4.8} $lh={1.5}>{'(AYAR) MİN.\nAG Beton Taşıyıcı\nTravers'}</Cell>
            <Cell $c={col('M')} $r={row(35)} $bg="#ee66ee" $fg="#302" $fs={4.8} $lh={1.5}>{'(AYAR) MİN.\nAG Taşıyıcı Demir\nTravers'}</Cell>
            <Cell $c={col('L')} $r={row(36)} $bg="#ffff00" $fs={8.5}>t-75</Cell>
            <Cell $c={col('M')} $r={row(36)} $bg="#ffff00" $fs={8.5}>6.5U-100</Cell>

            {/* min direk selection */}
            <Cell $c={col('P')} $cs={3} $r={row(30)} $bg="#fff" $fs={7.8} $bold={false} $fg="#333">MİN. DİREK SEÇİM BÖLÜMÜ</Cell>
            {minRows.map(([r1, r2, og, ag, a, b, c, d]) => (
              <Fragment key={og}>
                <Cell $c={col('P')} $r={row(r1)} $bg="#ff0000" $fg="#6a0010" $fs={5.4} $lh={1.6}>{`(AYAR) MİN.\n${og}`}</Cell>
                <Cell $c={col('R')} $r={row(r1)} $bg="#ee66ee" $fg="#401040" $fs={5.4} $lh={1.6}>{`(AYAR) MİN.\n${ag}`}</Cell>
                <Cell $c={col('P')} $r={row(r2)} $bg="#ffff00" $fs={9}>{a}</Cell>
                <PlainCell $c={col('Q')} $r={row(r2)} $fs={7.2} $fg="#555">{b}</PlainCell>
                <Cell $c={col('R')} $r={row(r2)} $bg="#ffff00" $fs={9}>{c}</Cell>
                <PlainCell $c={col('S')} $r={row(r2)} $fs={7.2} $fg="#555">{d}</PlainCell>
              </Fragment>
            ))}
            <Cell $c={col('T')} $r={row(30)} $bg="#fff" $fs={7.8} $bold={false} $fg="#333" $pl={46} $pre>İZOLATÖR</Cell>
            <Cell $c={col('T')} $r={row(31)} $bg="#00ffff" $fg="#123" $fs={5.4} $pl={17} $pre>OG İZOLATÖR</Cell>
            <Cell $c={col('T')} $r={row(32)} $bg="#fff" $fs={8.6} $pl={9} $pre $lh={1.3}>{'3(40kN/11B),\n3(VHD-35)'}</Cell>
          </SheetGrid>
        </SheetRow>

        <GreenHandle />
        <TealShape $x={1127} $y={226} $w={25} $h={47}>El<br />tar</TealShape>
        <SheetTitleShape $x={321} $y={701} $w={339} $h={19}>DİREK VEKTÖR ÇİZİM VE FORM-12 OLUŞTURMA ARACI</SheetTitleShape>
        <GrayCurl $x={608} $y={650} $w={8} $h={8} />
        <Watermark>1</Watermark>

        <Dialog>
          <DialogTitle>
            VERİLERİ AKTAR
            <WindowButtons>
              <Minus size={11} color="#555" />
              <Square size={10} color="#333" strokeWidth={1.4} />
              <X size={13} color="#333" strokeWidth={1.2} />
            </WindowButtons>
          </DialogTitle>
          <TabStrip>
            <DialogTab $active>HESAPLAR</DialogTab>
            <DialogTab>DEMIR DIREK</DialogTab>
            <DialogTab>BETON DIREK</DialogTab>
            <DialogTab>TRAVERSLER</DialogTab>
          </TabStrip>
          <DialogBody>
            <LeftPane>
              <KolGrid>
                <KolHeader $c={1} $cs={2}>KOL NO</KolHeader>
                <KolHeader $c={2} $pl={24} $cs={2}>Zay.</KolHeader>
                <KolHeader $c={4} $cs={2}>CER Kuv</KolHeader>
                <KolHeader $c={6}>AÇILAR</KolHeader>
                <KolHeader $c={8} $align="center">Seçilen İletken</KolHeader>
                {dialogRows.map(([no, cer, angle, wire]) => (
                  <Fragment key={no}>
                    <KolNo>{no}</KolNo>
                    <OptBox $c={2}><Check size={9} color="#222" strokeWidth={3} /></OptBox>
                    <OptBox $c={3} />
                    <ValueBox $c={4} $pl={9}>{cer}</ValueBox>
                    <ValueBox $c={6} $bg="#ffff66">{angle}</ValueBox>
                    <ValueBox $c={8}>{wire}</ValueBox>
                  </Fragment>
                ))}
              </KolGrid>
              <OptionList>
                <OptionChip><OptBox />Açı Ortay</OptionChip>
                <OptionChip><OptBox />Kafes Direk</OptionChip>
                <OptionChip><OptBox />Rüzgar Uygula</OptionChip>
              </OptionList>
              <ActionRow>
                <ActionButton $w={88} $bg="#ff0000" $fg="#8c1010">AutoCAD'e Aktar</ActionButton>
                <ActionButton $w={89} $bg="#00f020" $fg="#0a6a20">{'Excel Form-12\n(DTL) AKTAR'}</ActionButton>
              </ActionRow>
            </LeftPane>

            <InfoPane>
              <InfoLabel>DİREK NO</InfoLabel>
              <InfoBox $w={69} $h={27} $bg="#ffff00" $fg="#4f9f40" $bold $pt={1}>yeni-1</InfoBox>
              <InfoLabel $mt={4}>DEMİR CER</InfoLabel>
              <InfoBox $w={52} $h={15} $bg="#ffb6c1" $fg="#333" $bold>1202.26</InfoBox>
              <InfoLabel $mt={3}>BETON CER</InfoLabel>
              <InfoBox $w={52} $h={15} $bg="#c4ffff" $fg="#333" $bold>897.67</InfoBox>
              <InfoLabel $mt={3}>SEÇİLEN DİREK</InfoLabel>
              <InfoBox $w={69} $h={27} $bg="#0000ff" $fg="#d8d8ff" $pt={1}>12/14</InfoBox>
            </InfoPane>

            <FormPane>
              <Field><FieldLabel>BUZYÜKÜ BÖLGESİ</FieldLabel><SelectBox>1.BÖLGE<SelectArrow /></SelectBox></Field>
              <Field><FieldLabel>İLAVE TEPE KUV.</FieldLabel><SelectBox>10<SelectArrow /></SelectBox></Field>
              <Field><FieldLabel>İZOLATÖR TİPİ</FieldLabel><SelectBox>SİLİKON<SelectArrow /></SelectBox></Field>
              <Field><FieldLabel>İLAVE POT. YÜKÜ</FieldLabel><SelectBox>10<SelectArrow /></SelectBox></Field>
              <Field><FieldLabel>DİREK CİNSİ</FieldLabel><SelectBox>OG_DİREK<SelectArrow /></SelectBox></Field>
              <Field><FieldLabel>BETON DİREK BOYU</FieldLabel><SelectBox>12<SelectArrow /></SelectBox></Field>
              <Field $c={1} $r={4}><FieldLabel>DİREK TİPİ</FieldLabel><SelectBox $yellow>BETON DİRE<SelectArrow /></SelectBox></Field>
              <Field $c={1} $r={5}>
                <FieldLabel>DİREK FONK.</FieldLabel>
                <SelectBox $yellow><SelectedText $on>TR-D</SelectedText><SelectArrow /></SelectBox>
                <DropList>
                  <DropItems>
                    {DROP_ITEMS.map((d) => (
                      <DropItem key={d} $on={d === 'KT'}>{d}</DropItem>
                    ))}
                  </DropItems>
                  <ScrollTrack>
                    <ScrollCap />
                    <ScrollCap $down />
                  </ScrollTrack>
                  <Pointer width="11" height="17" viewBox="0 0 11 17">
                    <path d="M1 1v12l3-3 2 5 2-1-2-5h4z" fill="#fff" stroke="#333" strokeWidth="1" />
                  </Pointer>
                </DropList>
              </Field>
              <SideButtons>
                <SideButton $h={24} $bg="#1fa8a8" $fg="#d6f050">Excele Dön</SideButton>
                <SideButton $h={24} $bg="#c0c0f8" $fg="#10108a">AutoCAD'e Bağlan</SideButton>
              </SideButtons>
            </FormPane>
          </DialogBody>
          <StatusLine>Elektrik Teknikeri Ali HABER 0534 836 18 84</StatusLine>
        </Dialog>
      </ExcelWindow>
    </Page>
  );
};

export default App;
